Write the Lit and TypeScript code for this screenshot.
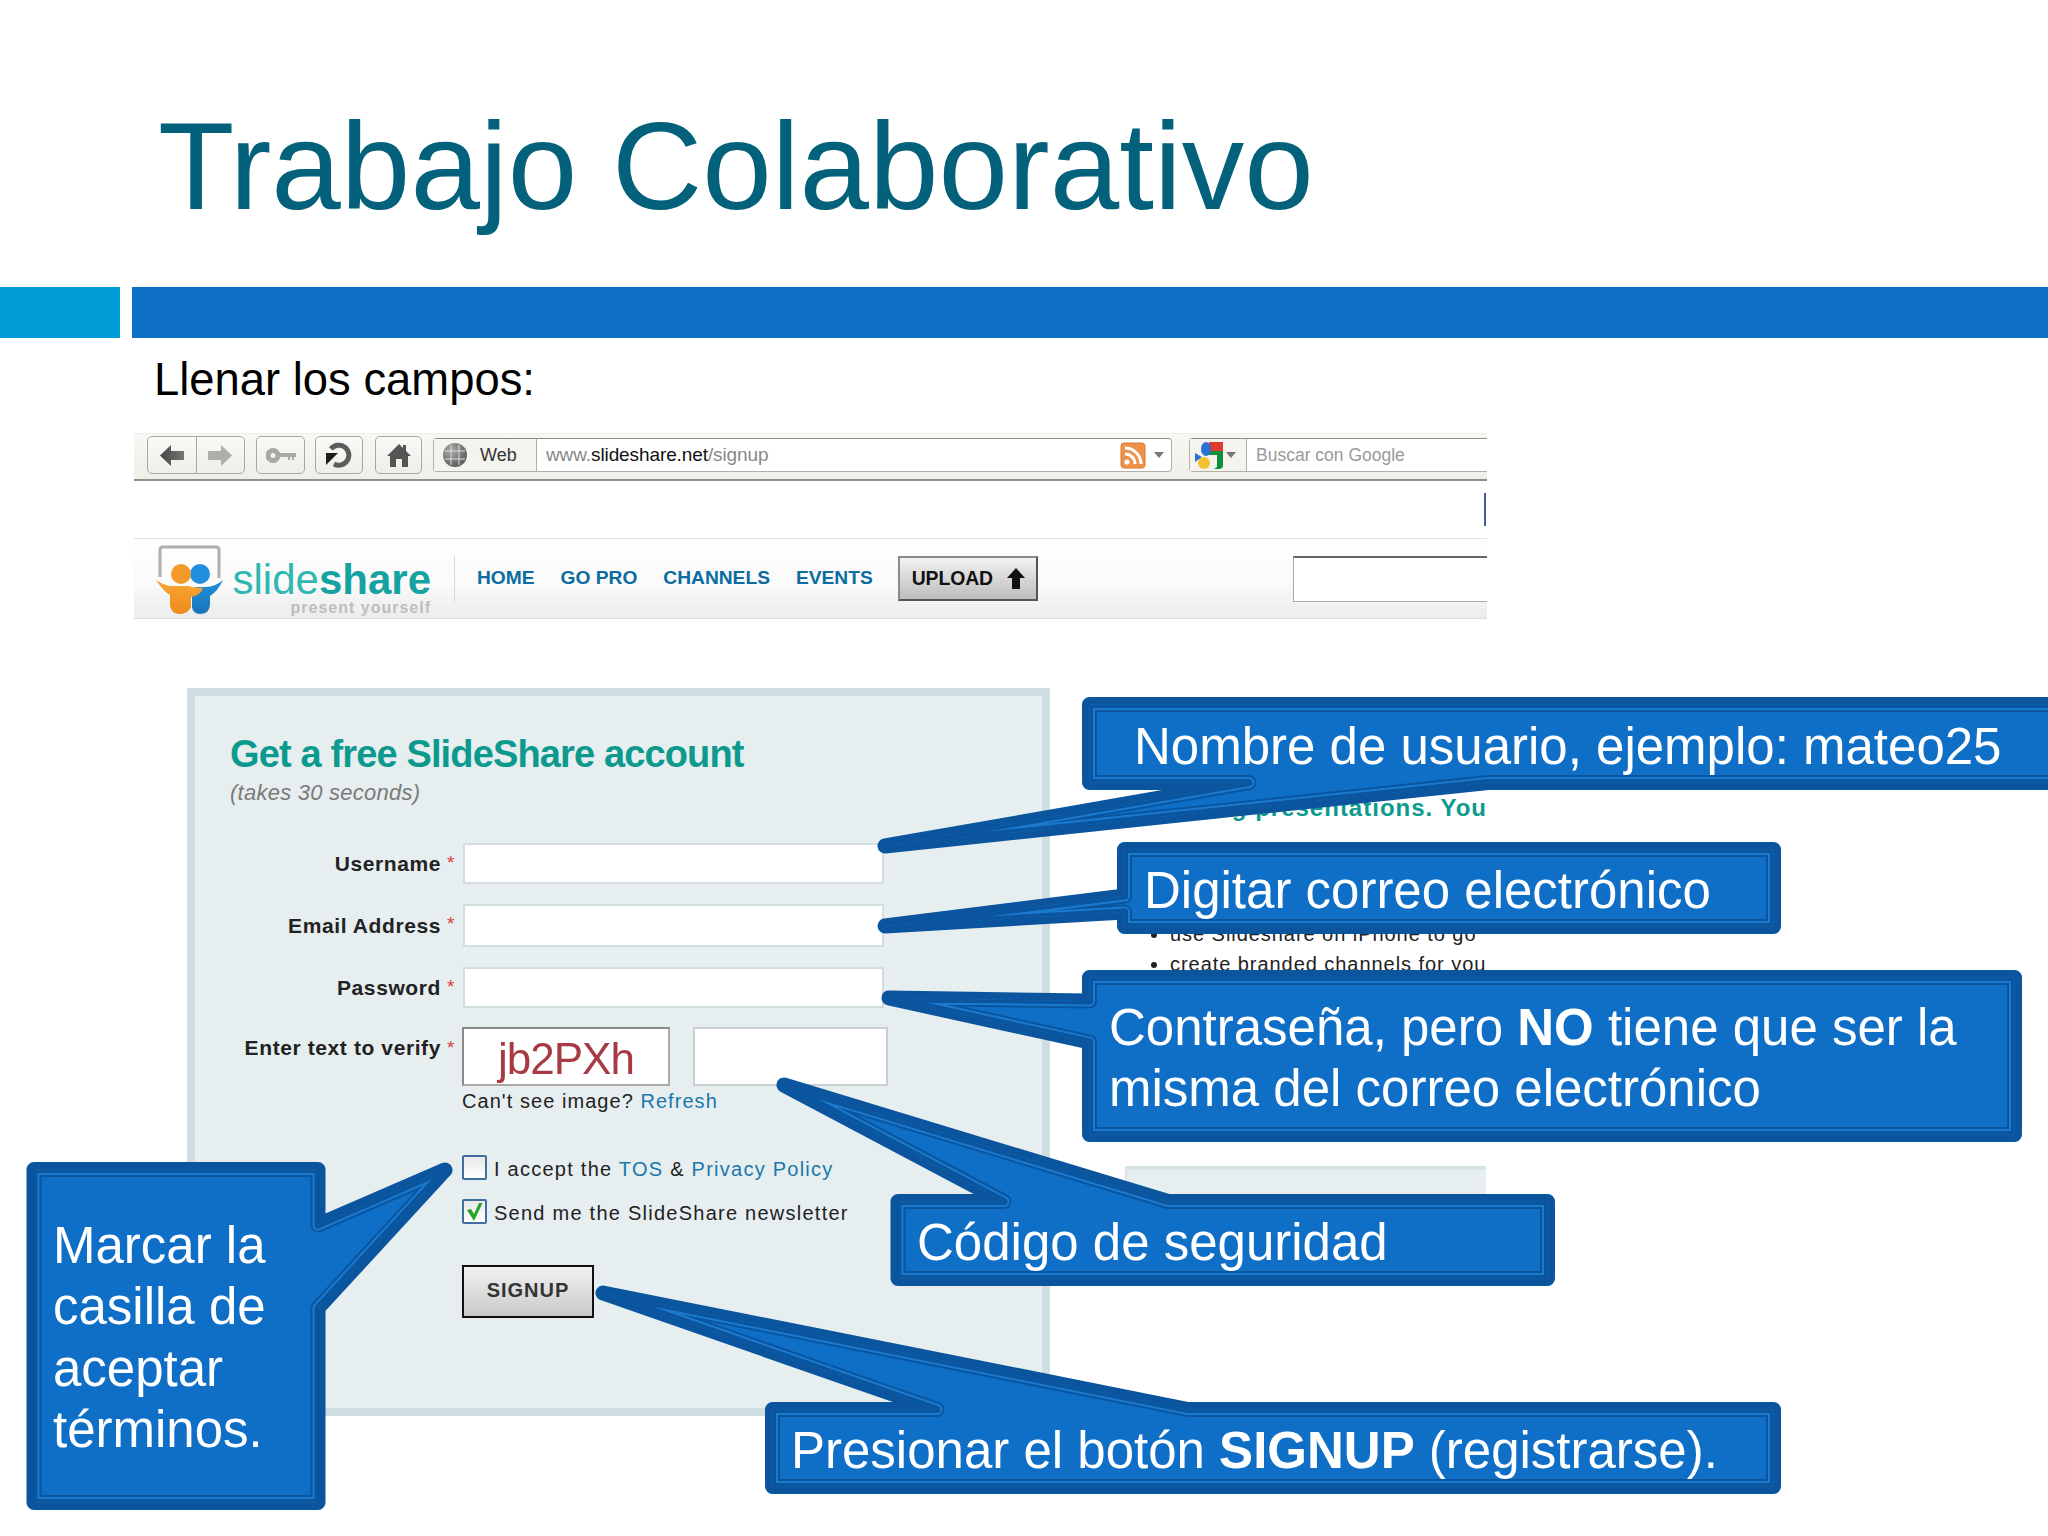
import { LitElement, html, css, svg } from "lit";
import { customElement } from "lit/decorators.js";

type Pt = [number, number];
interface Callout { id: string; pts: Pt[]; text: unknown; left: number; baseline: number; }

const rect = (l: number, t: number, r: number, b: number, tail: Pt[], side: "top" | "bottom" | "left" | "right"): Pt[] => {
  if (side === "bottom") return [[l, t], [r, t], [r, b], ...tail, [l, b]];
  if (side === "top") return [[l, t], ...tail, [r, t], [r, b], [l, b]];
  if (side === "left") return [[l, t], [r, t], [r, b], [l, b], ...tail];
  return [[l, t], [r, t], ...tail, [r, b], [l, b]];
};

const CALLOUTS: Callout[] = [
  { id: "c1", pts: rect(1089.5, 704.5, 2056, 782.5, [[1488, 782.5], [885, 846], [1249, 782.5]], "bottom"),
    text: html`Nombre de usuario, ejemplo: mateo25`, left: 1134, baseline: 763 },
  { id: "c2", pts: rect(1124.5, 849.5, 1773.5, 926.5, [[1124.5, 912], [885, 926], [1124.5, 896]], "left"),
    text: html`Digitar correo electrónico`, left: 1144, baseline: 907 },
  { id: "c3", pts: rect(1089.5, 977.5, 2014.5, 1134.5, [[1089.5, 1042], [889, 998], [1089.5, 1001]], "left"),
    text: html`Contraseña, pero <b>NO</b> tiene que ser la<br />misma del correo electrónico`, left: 1109, baseline: 1044 },
  { id: "c4", pts: rect(898, 1201.5, 1547.5, 1278.5, [[1004, 1201.5], [784, 1085], [1168, 1201.5]], "top"),
    text: html`Código de seguridad`, left: 917, baseline: 1259 },
  { id: "c5", pts: rect(772.5, 1409.5, 1773.5, 1486.5, [[937, 1409.5], [603, 1293], [1188, 1409.5]], "top"),
    text: html`Presionar el botón <b>SIGNUP</b> (registrarse).`, left: 791, baseline: 1467 },
  { id: "c6", pts: rect(34, 1169.5, 318, 1502.5, [[318, 1225], [445, 1170], [318, 1308]], "right"),
    text: html`Marcar la<br />casilla de<br />aceptar<br />términos.`, left: 53, baseline: 1262 },
];

const toPath = (p: Pt[]) => "M" + p.map((q) => q.join(" ")).join("L") + "Z";

@customElement("app-root")
export class AppRoot extends LitElement {
  static styles = css`
    :host { display: block; position: relative; width: 2048px; height: 1536px; overflow: hidden; background: #fff; font-family: "Liberation Sans", Arial, sans-serif; color: #000; }
    * { box-sizing: border-box; }
    .title { height: 287px; padding: 96px 0 0 158px; font-size: 125px; line-height: 140px; color: #04617b; margin: 0; font-weight: 400; }
    .bar { display: flex; gap: 12px; height: 51px; }
    .bar i { display: block; width: 120px; background: #009dd9; }
    .bar b { display: block; flex: 1; background: #0f6fc6; }
    .sub { margin: 16px 0 27px 154px; font-size: 45.4px; line-height: 52px; }

    .shot { margin-left: 134px; width: 1353px; }
    .tb { display: flex; align-items: flex-start; height: 48px; padding: 2px 0 0 13px; background: linear-gradient(#f8f7f3, #efeee8); border-bottom: 2px solid #8f8f86; border-top: 1px solid #f0efea; }
    .tbtn { display: flex; align-items: center; justify-content: center; height: 38px; border: 1px solid #a9a89f; border-radius: 5px; background: linear-gradient(#faf9f6, #eeede7); }
    .group { width: 98px; margin-right: 11px; }
    .group span { flex: 1; height: 100%; display: flex; align-items: center; justify-content: center; }
    .group span + span { border-left: 1px solid #a9a89f; }
    .key { width: 49px; margin-right: 10px; }
    .reload { width: 48px; margin-right: 12px; }
    .home { width: 47px; margin-right: 11px; }
    .addr { display: flex; align-items: center; height: 34px; margin-top: 2px; background: #fff; border: 1px solid #b0afa8; border-top-color: #8c8b84; border-radius: 4px; }
    .url { width: 739px; }
    .web { display: flex; align-items: center; width: 103px; height: 100%; padding-left: 8px; gap: 12px; background: #f4f3ee; border-right: 1px solid #b0afa8; font-size: 18px; color: #333; }
    .urltext { flex: 1; padding-left: 9px; font-size: 19px; letter-spacing: -0.1px; color: #888; }
    .urltext b { font-weight: 400; color: #111; }
    .rss { margin-right: 8px; }
    .caret { width: 0; height: 0; border: 5px solid transparent; border-top: 6px solid #777; border-bottom: 0; }
    .addr .caret { margin-right: 7px; }
    .search { width: 298px; margin-left: 17px; border-right: 0; border-radius: 4px 0 0 4px; }
    .gsec { display: flex; align-items: center; gap: 3px; width: 57px; height: 100%; padding-left: 5px; background: #f4f3ee; border-right: 1px solid #b0afa8; }
    .gsec .caret { margin-right: 0; }
    .gtext { padding-left: 9px; font-size: 17.5px; color: #999; }
    .spacer { display: flex; justify-content: flex-end; height: 57px; padding-top: 12px; }
    .tick { width: 2px; height: 33px; margin-right: 1px; background: #3d5f9e; }
    .hdr { display: flex; align-items: center; height: 81px; background: linear-gradient(#fff 0%, #fafafa 55%, #ececec 100%); border-top: 1px solid #e0e0e0; border-bottom: 1px solid #dcdcdc; padding-left: 18px; }
    .logo { flex: none; margin-top: 3px; }
    .word { display: flex; flex-direction: column; align-items: flex-end; width: 198px; margin-left: 5px; margin-top: 18px; }
    .ss { font-size: 42px; line-height: 42px; color: #2fb8b2; }
    .ss b { color: #14a3a0; }
    .py { margin-top: -1px; font-size: 16px; line-height: 16px; font-weight: 700; color: #bdbdbd; letter-spacing: 1px; }
    .vr { width: 1px; height: 46px; margin: 0 22px 0 23px; background: #d8d8d8; }
    nav { display: flex; gap: 26px; margin-top: -2px; font-size: 19.2px; font-weight: 700; color: #0a6ca0; }
    .upload { display: flex; align-items: center; justify-content: space-between; width: 140px; height: 45px; margin-left: 25px; padding: 0 11px 0 12px; background: linear-gradient(#f2f2f2, #bdbdbd); border: 2px solid #8b8b8b; border-right-color: #555; border-bottom-color: #555; font-size: 19.4px; font-weight: 700; color: #111; letter-spacing: -0.1px; }
    .hinput { width: 194px; height: 46px; margin-left: auto; background: #fff; border: 1px solid #aaa; border-top: 2px solid #666; border-right: 0; }

    .lower { display: flex; width: 1300px; margin: 69px 0 0 187px; }
    .panel { flex: none; width: 863px; height: 728px; padding: 35px 0 0 35px; background: #e6eef0; border: 8px solid #cfdfe1; }
    h2 { margin: 0; font-size: 38px; line-height: 46px; font-weight: 700; color: #0d9a8e; letter-spacing: -0.86px; }
    .takes { height: 28px; margin: 2px 0 36px; font-size: 22px; line-height: 28px; font-style: italic; letter-spacing: 0.25px; color: #7a7a7a; }
    .grid { display: grid; grid-template-columns: 233px 421px; row-gap: 20px; }
    .lab { display: flex; align-items: center; justify-content: flex-end; padding-right: 5px; font-size: 21px; font-weight: 700; color: #222; letter-spacing: 0.6px; }
    .lab i { align-self: flex-start; width: 9px; margin: 12px 2px 0 6px; font-style: normal; font-weight: 400; font-size: 19px; line-height: 16px; color: #d6413f; }
    .lab.top { align-items: flex-start; padding-top: 8px; height: 41px; }
    .lab.top i { margin-top: 4px; }
    .field { display: block; width: 100%; background: #fff; border: 2px solid #d4dde0; }
    .capt { display: flex; gap: 23px; margin: -1px 0 0 -1px; }
    .capimg { flex: none; display: flex; align-items: center; justify-content: center; width: 208px; height: 59px; padding-top: 4px; background: #fff; border: 2px solid #aaa; border-top-color: #8a8a8a; border-left-color: #8a8a8a; font-size: 44px; letter-spacing: -1px; color: #a83a44; filter: blur(0.4px); }
    .capinp { flex: none; width: 195px; height: 59px; background: #fff; border: 2px solid #c8d0d2; }
    .cant { margin: 3px 0 0 -1px; font-size: 20px; line-height: 24px; letter-spacing: 1.05px; color: #222; }
    a { color: #1a78ab; text-decoration: none; }
    .opts { margin: 42px 0 0 232px; }
    .opt { display: flex; align-items: center; gap: 7px; height: 25px; font-size: 20px; letter-spacing: 1.25px; color: #222; }
    .opt span { padding-top: 3px; }
    .opt + .opt { margin-top: 19px; }
    .box { display: flex; align-items: center; justify-content: center; width: 25px; height: 25px; background: linear-gradient(#e8e8e8, #fff); border: 2px solid #3e6f9f; border-radius: 2px; }
    .signup { display: flex; align-items: center; justify-content: center; width: 132px; height: 53px; margin-top: 41px; padding-bottom: 3px; background: linear-gradient(#f2f2f2, #c9c9c9); border: 2px solid #111; font-size: 20px; font-weight: 700; color: #333; letter-spacing: 1px; }

    .side { flex: 1; min-width: 0; white-space: nowrap; }
    .promo { display: flex; justify-content: flex-end; height: 28px; margin-top: 106px; font-size: 24px; line-height: 28px; font-weight: 700; letter-spacing: 1px; color: #0d9a8e; }
    ul { margin: 97px 0 0; padding: 0 0 0 120px; font-size: 20px; line-height: 30px; letter-spacing: 0.95px; color: #222; }
    .panel2 { height: 70px; margin: 187px 1px 0 75px; background: #e6eef0; border-top: 4px solid #d8e4e4; border-left: 2px solid #d8e4e4; }

    .overlay { position: absolute; left: 0; top: 0; }
    .ctext { position: absolute; margin: 0; font-size: 51px; line-height: 61.5px; color: #fff; white-space: nowrap; }
  `;

  private icons() {
    return {
      back: html`<svg width="24" height="21" viewBox="0 0 24 21"><defs><linearGradient id="gb" x1="0" x2="1"><stop offset="0" stop-color="#444"/><stop offset="1" stop-color="#777"/></linearGradient></defs><path d="M0 10.5 11 0v6h13v9H11v6z" fill="url(#gb)"/></svg>`,
      fwd: html`<svg width="24" height="21" viewBox="0 0 24 21"><path d="M24 10.5 13 0v6H0v9h13v6z" fill="#aeaeaa"/></svg>`,
      key: html`<svg width="30" height="15" viewBox="0 0 30 15"><circle cx="7" cy="7.5" r="5" fill="none" stroke="#a8a8a4" stroke-width="5"/><path d="M12 5h18v4h-2v3h-2V9h-2v3h-2V9h-10z" fill="#a8a8a4"/></svg>`,
      reload: html`<svg width="28" height="26" viewBox="0 0 28 26"><path d="M6 7A10 10 0 1 1 9 22" fill="none" stroke="#5c5c5c" stroke-width="5"/><path d="M1 11h12L1 23z" fill="#1d1d1d"/></svg>`,
      home: html`<svg width="24" height="23" viewBox="0 0 24 23"><path d="M0 12 12 0l4 4V1h3v6l5 5h-3v11h-6v-8h-6v8H3V12z" fill="#555"/></svg>`,
      globe: html`<svg width="26" height="26" viewBox="0 0 26 26"><defs><radialGradient id="gg" cx=".35" cy=".3" r=".8"><stop offset="0" stop-color="#aaa"/><stop offset="1" stop-color="#555"/></radialGradient></defs><circle cx="13" cy="13" r="12" fill="url(#gg)"/><path d="M9 3v20M17 3v20M3 9h20M3 17h20" stroke="#ddd" stroke-width="1"/></svg>`,
      rss: html`<svg class="rss" width="26" height="27" viewBox="0 0 26 27"><rect x="1" y="1" width="24" height="25" rx="3" fill="#ef9249" stroke="#d97b33"/><circle cx="7" cy="20" r="2.6" fill="#fff"/><path d="M5 12a10 10 0 0 1 10 10M5 6a16 16 0 0 1 16 16" fill="none" stroke="#fff" stroke-width="3"/></svg>`,
      google: html`<svg width="28" height="27" viewBox="0 0 28 27"><rect x="14" y="0" width="14" height="9" fill="#e03b2e"/><path d="M14 9h14v14a4 4 0 0 1-4 4h-5l3-2V13h-8z" fill="#0e8f3a"/><ellipse cx="11" cy="7" rx="5" ry="7" fill="#2d6fd2"/><path d="M0 11l7 4-7 5z" fill="#2d6fd2"/><circle cx="9" cy="21" r="6" fill="#f2c230"/></svg>`,
      logo: html`<svg class="logo" width="76" height="74" viewBox="152 542 76 74"><defs><linearGradient id="go" x1="0" y1="0" y2="1" x2="0"><stop offset="0" stop-color="#f7a733"/><stop offset="1" stop-color="#f08a1d"/></linearGradient><linearGradient id="gl" x1="0" y1="0" y2="1" x2="0"><stop offset="0" stop-color="#1f8fdc"/><stop offset="1" stop-color="#1a74b8"/></linearGradient></defs><path d="M160 576V549q0-3 3-3h53q3 0 3 3v28" fill="none" stroke="#aeaeae" stroke-width="3"/><path d="M223 579q-8 7-17 7h-10q-4 0-4 6v14q1 7 8 7 10 0 10-11v-7q8-5 13-16z" fill="url(#gl)"/><circle cx="200" cy="573" r="10" fill="#1f8fdc"/><path d="M156 579q9 6 16 6h14q5 0 5 1l12 1q-2 7-12 9v10q-3 7-11 7-9 0-10-9V594q-7-4-14-15z" fill="url(#go)"/><circle cx="181" cy="573" r="10" fill="#f39a2b"/></svg>`,
    };
  }

  private callout(c: Callout) {
    const d = toPath(c.pts);
    return svg`
      <clipPath id=${c.id}><path d=${d}></path></clipPath>
      <path d=${d} fill="#0f6fc6" stroke="#0a559e" stroke-width="15" stroke-linejoin="round"></path>
      <g clip-path=${`url(#${c.id})`} fill="none" stroke-linejoin="round">
        <path d=${d} stroke="#1a7ad0" stroke-width="11"></path>
        <path d=${d} stroke="#0a559e" stroke-width="7"></path>
      </g>`;
  }

  render() {
    const i = this.icons();
    return html`
      <h1 class="title">Trabajo Colaborativo</h1>
      <div class="bar"><i></i><b></b></div>
      <p class="sub">Llenar los campos:</p>

      <div class="shot">
        <div class="tb">
          <div class="tbtn group"><span>${i.back}</span><span>${i.fwd}</span></div>
          <div class="tbtn key">${i.key}</div>
          <div class="tbtn reload">${i.reload}</div>
          <div class="tbtn home">${i.home}</div>
          <div class="addr url">
            <div class="web">${i.globe}<span>Web</span></div>
            <div class="urltext">www.<b>slideshare.net</b>/signup</div>
            ${i.rss}<span class="caret"></span>
          </div>
          <div class="addr search">
            <div class="gsec">${i.google}<span class="caret"></span></div>
            <div class="gtext">Buscar con Google</div>
          </div>
        </div>
        <div class="spacer"><div class="tick"></div></div>
        <div class="hdr">
          ${i.logo}
          <div class="word">
            <div class="ss">slide<b>share</b></div>
            <div class="py">present yourself</div>
          </div>
          <div class="vr"></div>
          <nav><span>HOME</span><span>GO PRO</span><span>CHANNELS</span><span>EVENTS</span></nav>
          <div class="upload">UPLOAD
            <svg width="18" height="21" viewBox="0 0 18 21"><path d="M9 0l9 10h-5v11H5V10H0z" fill="#111"/></svg>
          </div>
          <div class="hinput"></div>
        </div>
      </div>

      <div class="lower">
        <div class="panel">
          <h2>Get a free SlideShare account</h2>
          <div class="takes">(takes 30 seconds)</div>
          <div class="grid">
            <div class="lab"><span>Username</span><i>*</i></div><div class="field" style="height:41px"></div>
            <div class="lab"><span>Email Address</span><i>*</i></div><div class="field" style="height:43px"></div>
            <div class="lab"><span>Password</span><i>*</i></div><div class="field" style="height:41px"></div>
            <div class="lab top"><span>Enter text to verify</span><i>*</i></div>
            <div>
              <div class="capt"><div class="capimg">jb2PXh</div><div class="capinp"></div></div>
              <div class="cant">Can't see image? <a>Refresh</a></div>
            </div>
          </div>
          <div class="opts">
            <div class="opt"><div class="box"></div><span>I accept the <a>TOS</a> &amp; <a>Privacy Policy</a></span></div>
            <div class="opt"><div class="box"><svg width="17" height="18" viewBox="0 0 17 18"><path d="M1 7l4-1 3 5 5-11h3.500L8 18z" fill="#27a327"/></svg></div><span>Send me the SlideShare newsletter</span></div>
            <div class="signup">SIGNUP</div>
          </div>
        </div>
        <div class="side">
          <div class="promo">ing presentations. You</div>
          <ul><li>use Slideshare on iPhone to go</li><li>create branded channels for you</li></ul>
          <div class="panel2"></div>
        </div>
      </div>

      <svg class="overlay" width="2048" height="1536" viewBox="0 0 2048 1536">
        ${CALLOUTS.map((c) => this.callout(c))}
      </svg>
      ${CALLOUTS.map((c) => html`<p class="ctext" style="left:${c.left}px;top:${c.baseline - 47.5}px">${c.text}</p>`)}
    `;
  }
}
